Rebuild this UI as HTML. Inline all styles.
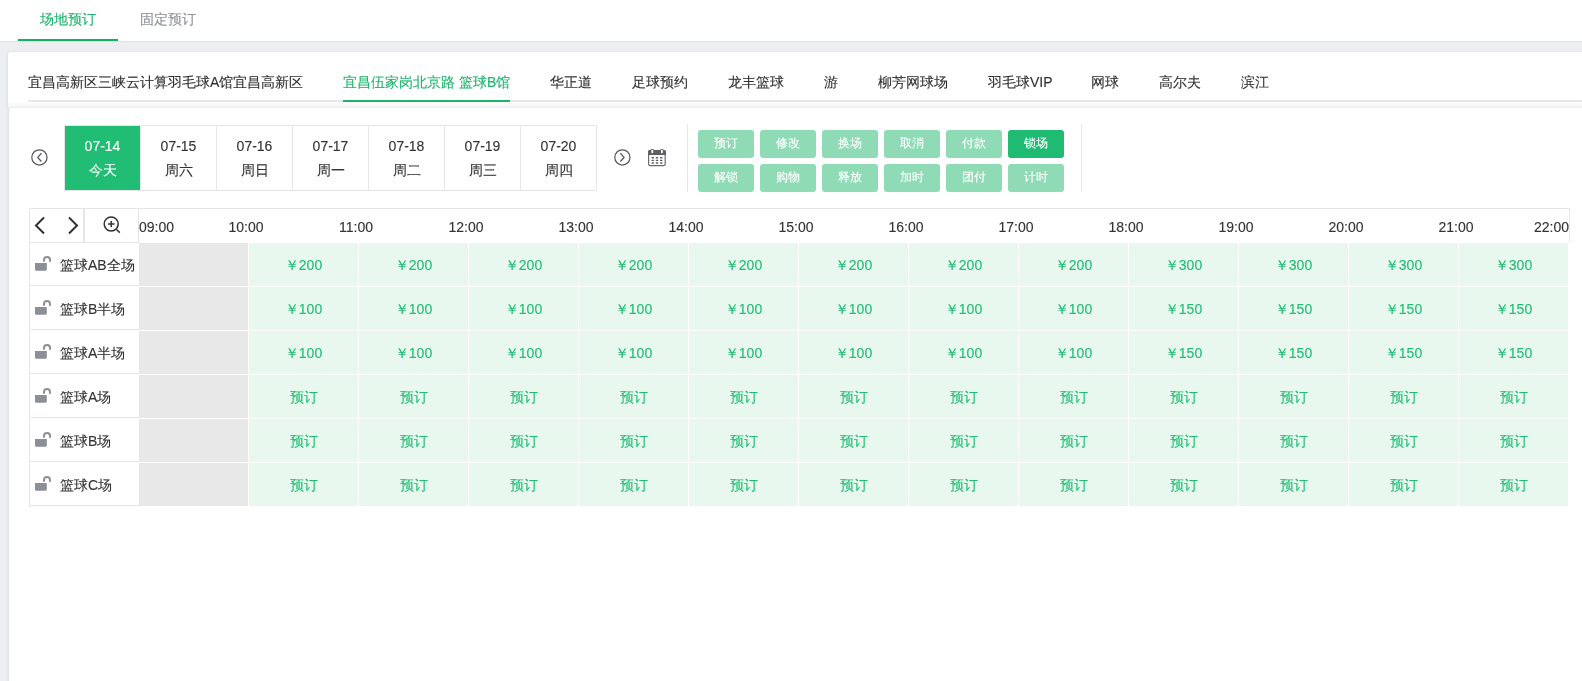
<!DOCTYPE html><html><head><meta charset="utf-8"><style>
*{margin:0;padding:0;box-sizing:border-box}
html,body{width:1582px;height:681px;overflow:hidden;background:#eceef1;font-family:"Liberation Sans",sans-serif;position:relative}
body{will-change:transform;-webkit-text-stroke:0.12px}
.abs{position:absolute}
#topbar{left:0;top:0;width:1582px;height:41px;background:#fff}
#topline{left:0;top:41px;width:1582px;height:1px;background:#e3e3e3}
.ttab{top:0;height:40px;line-height:38px;font-size:14px;text-align:center;width:100px;color:#909399}
.ttab.on{color:#1cb46c}
#tbar{left:18px;top:39px;width:100px;height:2px;background:#12b15f}
#card1{left:8px;top:52px;width:1600px;height:56px;background:linear-gradient(#fff 0,#fff 50px,#fcfcfc 51px,#f4f4f5 55px);border-top-left-radius:3px;box-shadow:-1px 0 3px rgba(40,50,80,.08)}
#gap{display:none}
#gapline{left:9px;top:107px;width:1600px;height:1px;background:#eef0f5}
#card2{left:9px;top:108px;width:1600px;height:600px;background:#fff;border-top-left-radius:3px;box-shadow:-1px 0 3px rgba(40,50,80,.08)}
#navline{left:28px;top:100px;width:1560px;height:2px;background:#e4e7ed}
#nav{left:28px;top:62px;height:40px;white-space:nowrap;font-size:0}
#navx span{display:inline-block;font-size:14px;line-height:40px;height:40px;padding:0 20px;color:#303133;position:relative}
#nav span:first-child{padding-left:0}
#nav span.on{color:#1cb46c}
#nav span.on:after{content:"";position:absolute;left:0;right:20px;bottom:0;height:2px;background:#1cb46c}
#dates{left:64px;top:125px;width:533px;height:66px;border:1px solid #e6e6e6;display:flex}
.dc{width:76px;height:64px;border-right:1px solid #e6e6e6;text-align:center;font-size:14px;color:#333;padding-top:8px;line-height:24px}
.dc:last-child{border-right:none;width:75px}
.dc.on{background:#21bd74;color:#fff}
.vsep{width:1px;background:#e6e6e6}
.btn{width:56px;height:28px;border-radius:3px;background:#8fdbb5;color:#fff;font-size:12px;line-height:27px;text-align:center}
.btn.on{background:#20bb72}
#grid{left:29px;top:208px;width:1541px;height:299px}
.gl{background:#e6e6e6}
.tl{top:219px;font-size:14px;color:#333;line-height:16px;white-space:nowrap}
.rl{left:30px;width:108px;height:43px;font-size:14px;color:#333;line-height:45px;padding-left:30px;white-space:nowrap}
.gc{left:139px;width:109px;height:43px;background:#e8e8e8}
.cell{width:109px;height:43px;background:#e8f8ef;color:#21bd74;font-size:14px;line-height:45px;text-align:center}
.lock{left:35px;}
.ntab{top:62px;height:40px;line-height:40px;font-size:14px;color:#303133;white-space:nowrap}
.ntab.on{color:#1cb46c}
.ntab.on:after{content:"";position:absolute;left:0;width:167px;bottom:0;height:2px;background:#1cb46c}
</style></head><body>
<div class="abs" id="topbar"></div><div class="abs" id="topline"></div>
<div class="abs ttab on" style="left:18px">场地预订</div><div class="abs ttab" style="left:118px">固定预订</div>
<div class="abs" id="tbar"></div>
<div class="abs" id="card1"></div><div class="abs" id="gap"></div><div class="abs" id="card2"></div><div class="abs" id="gapline"></div>
<div class="abs" id="navline"></div>
<div class="abs ntab" style="left:28px">宜昌高新区三峡云计算羽毛球A馆宜昌高新区</div>
<div class="abs ntab on" style="left:343px">宜昌伍家岗北京路 篮球B馆</div>
<div class="abs ntab" style="left:550px">华正道</div>
<div class="abs ntab" style="left:632px">足球预约</div>
<div class="abs ntab" style="left:728px">龙丰篮球</div>
<div class="abs ntab" style="left:824px">游</div>
<div class="abs ntab" style="left:878px">柳芳网球场</div>
<div class="abs ntab" style="left:988px">羽毛球VIP</div>
<div class="abs ntab" style="left:1091px">网球</div>
<div class="abs ntab" style="left:1159px">高尔夫</div>
<div class="abs ntab" style="left:1241px">滨江</div>
<svg class="abs" style="left:30.6px;top:149px" width="17" height="17" viewBox="0 0 17 17"><circle cx="8.4" cy="8.4" r="7.6" fill="none" stroke="#58595d" stroke-width="1.25"/><path d="M10.4 4.3 L6.8 8.4 L10.4 12.5" fill="none" stroke="#58595d" stroke-width="1.3"/></svg>
<svg class="abs" style="left:613.6px;top:149px" width="17" height="17" viewBox="0 0 17 17"><circle cx="8.4" cy="8.4" r="7.6" fill="none" stroke="#58595d" stroke-width="1.25"/><path d="M6.4 4.3 L10 8.4 L6.4 12.5" fill="none" stroke="#58595d" stroke-width="1.3"/></svg>
<svg class="abs" style="left:648px;top:149px" width="18" height="18" viewBox="0 0 18 18"><rect x="0.6" y="1.6" width="16.6" height="15" rx="1.6" fill="#fff" stroke="#6a6b6f" stroke-width="1.2"/><path d="M0 6 V3 A2 2 0 0 1 2 1 H16 A2 2 0 0 1 18 3 V6 Z" fill="#5f6063"/><rect x="2.6" y="0" width="3.4" height="4.8" rx="1.2" fill="#5f6063"/><rect x="3.4" y="0.9" width="1.8" height="3.2" fill="#fff"/><rect x="12.2" y="0" width="3.4" height="4.8" rx="1.2" fill="#5f6063"/><rect x="13" y="0.9" width="1.8" height="3.2" fill="#fff"/><rect x="3.5" y="8.1" width="2.5" height="1.4" rx="0.4" fill="#5f6063"/><rect x="3.5" y="10.7" width="2.5" height="1.4" rx="0.4" fill="#5f6063"/><rect x="3.5" y="13.3" width="2.5" height="1.4" rx="0.4" fill="#5f6063"/><rect x="7.75" y="8.1" width="2.5" height="1.4" rx="0.4" fill="#5f6063"/><rect x="7.75" y="10.7" width="2.5" height="1.4" rx="0.4" fill="#5f6063"/><rect x="7.75" y="13.3" width="2.5" height="1.4" rx="0.4" fill="#5f6063"/><rect x="12" y="8.1" width="2.5" height="1.4" rx="0.4" fill="#5f6063"/><rect x="12" y="10.7" width="2.5" height="1.4" rx="0.4" fill="#5f6063"/><rect x="12" y="13.3" width="2.5" height="1.4" rx="0.4" fill="#5f6063"/></svg>
<div class="abs" id="dates"><div class="dc on">07-14<br>今天</div><div class="dc">07-15<br>周六</div><div class="dc">07-16<br>周日</div><div class="dc">07-17<br>周一</div><div class="dc">07-18<br>周二</div><div class="dc">07-19<br>周三</div><div class="dc">07-20<br>周四</div></div>
<div class="abs vsep" style="left:687px;top:124px;height:68px"></div>
<div class="abs vsep" style="left:1081px;top:124px;height:68px"></div>
<div class="abs btn" style="left:698px;top:130px">预订</div>
<div class="abs btn" style="left:760px;top:130px">修改</div>
<div class="abs btn" style="left:822px;top:130px">换场</div>
<div class="abs btn" style="left:884px;top:130px">取消</div>
<div class="abs btn" style="left:946px;top:130px">付款</div>
<div class="abs btn on" style="left:1008px;top:130px">锁场</div>
<div class="abs btn" style="left:698px;top:164px">解锁</div>
<div class="abs btn" style="left:760px;top:164px">购物</div>
<div class="abs btn" style="left:822px;top:164px">释放</div>
<div class="abs btn" style="left:884px;top:164px">加时</div>
<div class="abs btn" style="left:946px;top:164px">团付</div>
<div class="abs btn" style="left:1008px;top:164px">计时</div>
<div class="abs gl" style="left:29px;top:208px;width:1541px;height:1px"></div>
<div class="abs gl" style="left:29px;top:208px;width:1px;height:299px"></div>
<div class="abs gl" style="left:1569px;top:208px;width:1px;height:34px"></div>
<div class="abs gl" style="left:29px;top:242px;width:110px;height:1px"></div>
<div class="abs gl" style="left:83px;top:208px;width:2px;height:35px"></div>
<div class="abs gl" style="left:138px;top:208px;width:1px;height:35px"></div>
<svg class="abs" style="left:33px;top:216px" width="14" height="20" viewBox="0 0 14 20"><path d="M11 1.5 L3 9.5 L11 17.5" fill="none" stroke="#303133" stroke-width="2"/></svg>
<svg class="abs" style="left:66px;top:216px" width="14" height="20" viewBox="0 0 14 20"><path d="M3 1.5 L11 9.5 L3 17.5" fill="none" stroke="#303133" stroke-width="2"/></svg>
<svg class="abs" style="left:101px;top:214px" width="22" height="22" viewBox="0 0 22 22"><circle cx="10.2" cy="10" r="7" fill="none" stroke="#303133" stroke-width="1.5"/><path d="M7 10 H13.5 M10.2 7 V13" stroke="#303133" stroke-width="1.5"/><path d="M15.5 15.5 L18.8 18.6" stroke="#303133" stroke-width="1.5"/></svg>
<div class="abs tl" style="left:139px">09:00</div>
<div class="abs tl" style="left:216px;width:60px;text-align:center">10:00</div>
<div class="abs tl" style="left:326px;width:60px;text-align:center">11:00</div>
<div class="abs tl" style="left:436px;width:60px;text-align:center">12:00</div>
<div class="abs tl" style="left:546px;width:60px;text-align:center">13:00</div>
<div class="abs tl" style="left:656px;width:60px;text-align:center">14:00</div>
<div class="abs tl" style="left:766px;width:60px;text-align:center">15:00</div>
<div class="abs tl" style="left:876px;width:60px;text-align:center">16:00</div>
<div class="abs tl" style="left:986px;width:60px;text-align:center">17:00</div>
<div class="abs tl" style="left:1096px;width:60px;text-align:center">18:00</div>
<div class="abs tl" style="left:1206px;width:60px;text-align:center">19:00</div>
<div class="abs tl" style="left:1316px;width:60px;text-align:center">20:00</div>
<div class="abs tl" style="left:1426px;width:60px;text-align:center">21:00</div>
<div class="abs tl" style="left:1531px;width:38px;text-align:right">22:00</div>
<div class="abs gl" style="left:29px;top:285px;width:110px;height:1px"></div>
<div class="abs rl" style="top:243px">篮球AB全场</div>
<svg class="abs" style="left:35px;top:256px" width="17" height="16" viewBox="0 0 17 16"><path d="M0 7 H11.8 V13.2 A1.6 1.6 0 0 1 10.2 14.8 H1.6 A1.6 1.6 0 0 1 0 13.2 Z" fill="#8c8f98"/><path d="M9 5.8 V4 A3 3 0 0 1 15 4 V5.8" fill="none" stroke="#8c8f98" stroke-width="2"/></svg>
<div class="abs gc" style="top:243px"></div>
<div class="abs cell" style="left:249px;top:243px">￥200</div>
<div class="abs cell" style="left:359px;top:243px">￥200</div>
<div class="abs cell" style="left:469px;top:243px">￥200</div>
<div class="abs cell" style="left:579px;top:243px">￥200</div>
<div class="abs cell" style="left:689px;top:243px">￥200</div>
<div class="abs cell" style="left:799px;top:243px">￥200</div>
<div class="abs cell" style="left:909px;top:243px">￥200</div>
<div class="abs cell" style="left:1019px;top:243px">￥200</div>
<div class="abs cell" style="left:1129px;top:243px">￥300</div>
<div class="abs cell" style="left:1239px;top:243px">￥300</div>
<div class="abs cell" style="left:1349px;top:243px">￥300</div>
<div class="abs cell" style="left:1459px;top:243px">￥300</div>
<div class="abs gl" style="left:29px;top:329px;width:110px;height:1px"></div>
<div class="abs rl" style="top:287px">篮球B半场</div>
<svg class="abs" style="left:35px;top:300px" width="17" height="16" viewBox="0 0 17 16"><path d="M0 7 H11.8 V13.2 A1.6 1.6 0 0 1 10.2 14.8 H1.6 A1.6 1.6 0 0 1 0 13.2 Z" fill="#8c8f98"/><path d="M9 5.8 V4 A3 3 0 0 1 15 4 V5.8" fill="none" stroke="#8c8f98" stroke-width="2"/></svg>
<div class="abs gc" style="top:287px"></div>
<div class="abs cell" style="left:249px;top:287px">￥100</div>
<div class="abs cell" style="left:359px;top:287px">￥100</div>
<div class="abs cell" style="left:469px;top:287px">￥100</div>
<div class="abs cell" style="left:579px;top:287px">￥100</div>
<div class="abs cell" style="left:689px;top:287px">￥100</div>
<div class="abs cell" style="left:799px;top:287px">￥100</div>
<div class="abs cell" style="left:909px;top:287px">￥100</div>
<div class="abs cell" style="left:1019px;top:287px">￥100</div>
<div class="abs cell" style="left:1129px;top:287px">￥150</div>
<div class="abs cell" style="left:1239px;top:287px">￥150</div>
<div class="abs cell" style="left:1349px;top:287px">￥150</div>
<div class="abs cell" style="left:1459px;top:287px">￥150</div>
<div class="abs gl" style="left:29px;top:373px;width:110px;height:1px"></div>
<div class="abs rl" style="top:331px">篮球A半场</div>
<svg class="abs" style="left:35px;top:344px" width="17" height="16" viewBox="0 0 17 16"><path d="M0 7 H11.8 V13.2 A1.6 1.6 0 0 1 10.2 14.8 H1.6 A1.6 1.6 0 0 1 0 13.2 Z" fill="#8c8f98"/><path d="M9 5.8 V4 A3 3 0 0 1 15 4 V5.8" fill="none" stroke="#8c8f98" stroke-width="2"/></svg>
<div class="abs gc" style="top:331px"></div>
<div class="abs cell" style="left:249px;top:331px">￥100</div>
<div class="abs cell" style="left:359px;top:331px">￥100</div>
<div class="abs cell" style="left:469px;top:331px">￥100</div>
<div class="abs cell" style="left:579px;top:331px">￥100</div>
<div class="abs cell" style="left:689px;top:331px">￥100</div>
<div class="abs cell" style="left:799px;top:331px">￥100</div>
<div class="abs cell" style="left:909px;top:331px">￥100</div>
<div class="abs cell" style="left:1019px;top:331px">￥100</div>
<div class="abs cell" style="left:1129px;top:331px">￥150</div>
<div class="abs cell" style="left:1239px;top:331px">￥150</div>
<div class="abs cell" style="left:1349px;top:331px">￥150</div>
<div class="abs cell" style="left:1459px;top:331px">￥150</div>
<div class="abs gl" style="left:29px;top:417px;width:110px;height:1px"></div>
<div class="abs rl" style="top:375px">篮球A场</div>
<svg class="abs" style="left:35px;top:388px" width="17" height="16" viewBox="0 0 17 16"><path d="M0 7 H11.8 V13.2 A1.6 1.6 0 0 1 10.2 14.8 H1.6 A1.6 1.6 0 0 1 0 13.2 Z" fill="#8c8f98"/><path d="M9 5.8 V4 A3 3 0 0 1 15 4 V5.8" fill="none" stroke="#8c8f98" stroke-width="2"/></svg>
<div class="abs gc" style="top:375px"></div>
<div class="abs cell" style="left:249px;top:375px">预订</div>
<div class="abs cell" style="left:359px;top:375px">预订</div>
<div class="abs cell" style="left:469px;top:375px">预订</div>
<div class="abs cell" style="left:579px;top:375px">预订</div>
<div class="abs cell" style="left:689px;top:375px">预订</div>
<div class="abs cell" style="left:799px;top:375px">预订</div>
<div class="abs cell" style="left:909px;top:375px">预订</div>
<div class="abs cell" style="left:1019px;top:375px">预订</div>
<div class="abs cell" style="left:1129px;top:375px">预订</div>
<div class="abs cell" style="left:1239px;top:375px">预订</div>
<div class="abs cell" style="left:1349px;top:375px">预订</div>
<div class="abs cell" style="left:1459px;top:375px">预订</div>
<div class="abs gl" style="left:29px;top:461px;width:110px;height:1px"></div>
<div class="abs rl" style="top:419px">篮球B场</div>
<svg class="abs" style="left:35px;top:432px" width="17" height="16" viewBox="0 0 17 16"><path d="M0 7 H11.8 V13.2 A1.6 1.6 0 0 1 10.2 14.8 H1.6 A1.6 1.6 0 0 1 0 13.2 Z" fill="#8c8f98"/><path d="M9 5.8 V4 A3 3 0 0 1 15 4 V5.8" fill="none" stroke="#8c8f98" stroke-width="2"/></svg>
<div class="abs gc" style="top:419px"></div>
<div class="abs cell" style="left:249px;top:419px">预订</div>
<div class="abs cell" style="left:359px;top:419px">预订</div>
<div class="abs cell" style="left:469px;top:419px">预订</div>
<div class="abs cell" style="left:579px;top:419px">预订</div>
<div class="abs cell" style="left:689px;top:419px">预订</div>
<div class="abs cell" style="left:799px;top:419px">预订</div>
<div class="abs cell" style="left:909px;top:419px">预订</div>
<div class="abs cell" style="left:1019px;top:419px">预订</div>
<div class="abs cell" style="left:1129px;top:419px">预订</div>
<div class="abs cell" style="left:1239px;top:419px">预订</div>
<div class="abs cell" style="left:1349px;top:419px">预订</div>
<div class="abs cell" style="left:1459px;top:419px">预订</div>
<div class="abs gl" style="left:29px;top:505px;width:110px;height:1px"></div>
<div class="abs rl" style="top:463px">篮球C场</div>
<svg class="abs" style="left:35px;top:476px" width="17" height="16" viewBox="0 0 17 16"><path d="M0 7 H11.8 V13.2 A1.6 1.6 0 0 1 10.2 14.8 H1.6 A1.6 1.6 0 0 1 0 13.2 Z" fill="#8c8f98"/><path d="M9 5.8 V4 A3 3 0 0 1 15 4 V5.8" fill="none" stroke="#8c8f98" stroke-width="2"/></svg>
<div class="abs gc" style="top:463px"></div>
<div class="abs cell" style="left:249px;top:463px">预订</div>
<div class="abs cell" style="left:359px;top:463px">预订</div>
<div class="abs cell" style="left:469px;top:463px">预订</div>
<div class="abs cell" style="left:579px;top:463px">预订</div>
<div class="abs cell" style="left:689px;top:463px">预订</div>
<div class="abs cell" style="left:799px;top:463px">预订</div>
<div class="abs cell" style="left:909px;top:463px">预订</div>
<div class="abs cell" style="left:1019px;top:463px">预订</div>
<div class="abs cell" style="left:1129px;top:463px">预订</div>
<div class="abs cell" style="left:1239px;top:463px">预订</div>
<div class="abs cell" style="left:1349px;top:463px">预订</div>
<div class="abs cell" style="left:1459px;top:463px">预订</div>
</body></html>
